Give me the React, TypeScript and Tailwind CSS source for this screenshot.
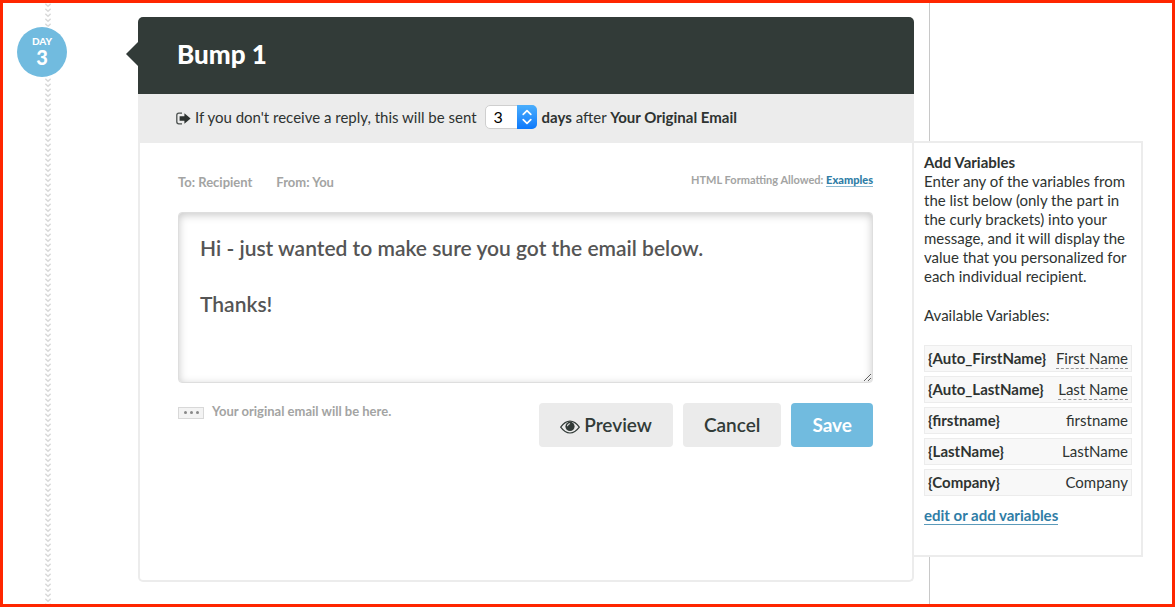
import { useState } from "react";

type Variable = { token: string; label: string; hint?: boolean };

const variables: Variable[] = [
  { token: "{Auto_FirstName}", label: "First Name", hint: true },
  { token: "{Auto_LastName}", label: "Last Name", hint: true },
  { token: "{firstname}", label: "firstname" },
  { token: "{LastName}", label: "LastName" },
  { token: "{Company}", label: "Company" },
];

function Timeline() {
  return (
    <div className="relative w-[135px] shrink-0 pl-[42px]">
      <svg className="h-full w-[6px]" aria-hidden="true">
        <defs>
          <pattern id="chevrons" width="6" height="5" patternUnits="userSpaceOnUse">
            <path d="M0.3 0.8 L3 3.2 L5.7 0.8" fill="none" stroke="#d9d9d9" strokeWidth="1.5" />
          </pattern>
        </defs>
        <rect width="6" height="100%" fill="url(#chevrons)" />
      </svg>
      <div className="absolute left-[14px] top-6 flex size-[50px] flex-col items-center justify-center rounded-full bg-[#71bbdf] pb-[2px] font-black text-white ring-1 ring-white">
        <span className="text-[10px] leading-3">DAY</span>
        <span className="text-xl leading-5">3</span>
      </div>
    </div>
  );
}

function SendIcon() {
  return (
    <svg className="mt-[3px] h-[13px] w-[15px] shrink-0" viewBox="0 0 15 13" aria-hidden="true">
      <path d="M6 1.2H2.8Q0.8 1.2 0.8 3.2V9.8Q0.8 11.8 2.8 11.8H6" fill="none" stroke="#4b504e" strokeWidth="1.3" />
      <path d="M3.6 4.2H8.4V1.2L14.6 6.5L8.4 11.8V8.8H3.6Z" fill="#2e3331" />
    </svg>
  );
}

function EyeIcon() {
  return (
    <svg className="mt-1 h-[14px] w-5" viewBox="0 0 20 14" aria-hidden="true">
      <path d="M0.7 7.2Q5 1.2 10 1.2T19.3 7.2Q15 13 10 13T0.7 7.2Z" fill="none" stroke="#323b38" strokeWidth="1.2" />
      <circle cx="10" cy="6.4" r="4.6" fill="#323b38" />
      <path d="M7.6 5.8Q7.8 4 9.6 3.7" fill="none" stroke="#ebebeb" strokeWidth="1.1" strokeLinecap="round" />
    </svg>
  );
}

function DaySelect() {
  const [days, setDays] = useState("3");
  return (
    <span className="relative ml-1 mr-px flex h-6 w-[52px]">
      <select
        id="days"
        value={days}
        onChange={(e) => setDays(e.target.value)}
        className="w-full appearance-none rounded-[5px] border border-[#cfcfcf] bg-white pl-2 text-base leading-5 text-black"
      >
        {["1", "2", "3", "4", "5", "6", "7"].map((n) => (
          <option key={n}>{n}</option>
        ))}
      </select>
      <span className="pointer-events-none absolute inset-y-0 right-0 flex w-5 items-center justify-center rounded-r-[5px] bg-linear-to-b from-[#4aaefc] to-[#0a78fb]">
        <svg className="h-4 w-3" viewBox="0 0 12 16" fill="none" stroke="#fff" strokeWidth="1.7" strokeLinecap="round" strokeLinejoin="round" aria-hidden="true">
          <path d="M2.2 5.4L6 1.6L9.8 5.4M2.2 10.6L6 14.4L9.8 10.6" />
        </svg>
      </span>
    </span>
  );
}

function MessageCard() {
  const [message, setMessage] = useState("Hi - just wanted to make sure you got the email below.\n\nThanks!");
  return (
    <main className="flex min-w-0 flex-1 flex-col pb-[22px] pt-[14px]">
      <header className="relative flex h-[77px] items-center rounded-t-[5px] bg-[#323b38] pb-1 pl-[39px]">
        <svg className="absolute -left-3 top-[25px] h-6 w-3" viewBox="0 0 12 24" aria-hidden="true">
          <path d="M12 0L0 12L12 24Z" fill="#323b38" />
        </svg>
        <h1 className="text-[26px] font-black leading-8 text-white">Bump 1</h1>
      </header>
      <div className="flex h-[49px] items-center gap-1 bg-[#ececec] pb-1 pl-[38px]">
        <SendIcon />
        <label htmlFor="days">If you don't receive a reply, this will be sent</label>
        <DaySelect />
        <span>
          <b>days</b> after <b>Your Original Email</b>
        </span>
      </div>
      <section className="flex-1 rounded-b-[5px] border-2 border-t-0 border-[#ececec] pl-[38px] pr-[39px] pt-[27px]">
        <div className="flex items-center gap-6 text-[13px] font-bold leading-6 text-[#a3a4a3]">
          <span>To: Recipient</span>
          <span>From: You</span>
          <span className="ml-auto pb-1 text-[11px] leading-5">
            HTML Formatting Allowed:{" "}
            <a href="#examples" className="border-b border-[#8fbbd2] font-black text-[#2f7da6]">Examples</a>
          </span>
        </div>
        <textarea
          aria-label="Message"
          value={message}
          onChange={(e) => setMessage(e.target.value)}
          className="mt-[18px] block h-[171px] w-full resize-y rounded-[4px] border border-[#dedede] px-[21px] py-[21px] text-[21px] font-semibold leading-7 text-[#555] shadow-[inset_0_2px_8px_#00000038] outline-none"
        />
        <div className="mt-5 flex items-start">
          <div className="flex items-center gap-2 text-[13px] font-bold leading-4 text-[#a3a4a3]">
            <span className="mt-[3px] flex h-3 w-[26px] items-center justify-center gap-[3px] border border-[#d8d8d8] bg-[#f3f3f3]">
              <i className="size-[3px] rounded-full bg-[#888]" />
              <i className="size-[3px] rounded-full bg-[#888]" />
              <i className="size-[3px] rounded-full bg-[#888]" />
            </span>
            Your original email will be here.
          </div>
          <div className="ml-auto flex gap-[10px] text-[19px] font-semibold leading-6 text-[#323b38]">
            <button className="flex h-[44px] items-center gap-1 rounded-[4px] bg-[#ebebeb] px-[21px]"><EyeIcon />Preview</button>
            <button className="h-[44px] rounded-[4px] bg-[#ebebeb] px-[21px]">Cancel</button>
            <button className="h-[44px] rounded-[4px] bg-[#71bbdf] px-[21px] font-bold text-white">Save</button>
          </div>
        </div>
      </section>
    </main>
  );
}

function VariablesPanel() {
  return (
    <aside className="mr-[29px] flex w-[229px] shrink-0 flex-col">
      <div className="ml-[15px] h-[138px] border-l border-[#c8c8c8]" />
      <div className="border-2 border-l-0 border-[#ececec] pb-[30px] pl-[10px] pr-[9px] pt-[10px]">
        <h2 className="font-bold leading-[19px]">Add Variables</h2>
        <p className="leading-[19px]">
          Enter any of the variables from the list below (only the part in the curly brackets) into your message, and it
          will display the value that you personalized for each individual recipient.
        </p>
        <p className="mt-5 leading-[19px]">Available Variables:</p>
        <dl className="mt-5 flex flex-col gap-1">
          {variables.map((v) => (
            <div key={v.token} className="flex h-[27px] items-center justify-between border border-[#ececec] bg-[#f8f8f8] px-[3px]">
              <dt className="pb-px font-bold">{v.token}</dt>
              <dd className={v.hint ? "border-b border-dashed border-[#999]" : "pb-px"}>{v.label}</dd>
            </div>
          ))}
        </dl>
        <a href="#variables" className="mt-[11px] inline-block border-b border-[#5b9aba] font-bold leading-[17px] text-[#2f7da6]">
          edit or add variables
        </a>
      </div>
      <div className="ml-[15px] flex-1 border-l border-[#c8c8c8]" />
    </aside>
  );
}

export default function App() {
  return (
    <div className="flex min-h-screen border-[3px] border-[#ff2600] bg-white font-['Lato','Open_Sans',sans-serif] text-[15px] leading-5 text-[#2e3331]">
      <Timeline />
      <MessageCard />
      <VariablesPanel />
    </div>
  );
}
